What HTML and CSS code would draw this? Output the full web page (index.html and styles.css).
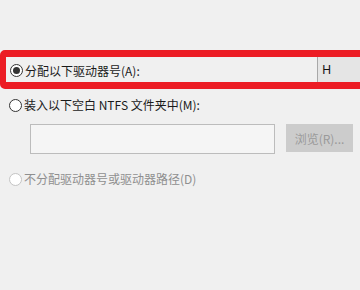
FILE: index.html
```html
<!DOCTYPE html>
<html>
<head>
<meta charset="utf-8">
<link rel="stylesheet" href="styles.css">
</head>
<body>
<div class="page">
  <div class="highlight">
    <div class="opt opt-first">
      <span class="radio checked"></span>
      <span class="label">分配以下驱动器号(A):</span>
    </div>
    <div class="combo">H</div>
  </div>
  <div class="opt opt-second">
    <span class="radio"></span>
    <span class="label">装入以下空白 NTFS 文件夹中(M):</span>
  </div>
  <div class="path-row">
    <div class="textbox"></div>
    <div class="button">浏览(R)...</div>
  </div>
  <div class="opt opt-third">
    <span class="radio disabled"></span>
    <span class="label muted">不分配驱动器号或驱动器路径(D)</span>
  </div>
</div>
</body>
</html>
```
FILE: styles.css
```css
html, body {
  margin: 0;
  padding: 0;
  background: #f0f0f0;
  overflow: hidden;
}
.page {
  width: 360px;
  height: 290px;
  overflow: hidden;
  font-family: "Noto Sans CJK SC", "Noto Sans", sans-serif;
  font-size: 12px;
  color: #1a1a1a;
  padding-top: 50px;
  box-sizing: border-box;
}
.highlight {
  width: 380px;
  height: 39px;
  box-sizing: border-box;
  border: 7px solid #ec1c24;
  border-left-width: 6px;
  border-radius: 5px;
  display: flex;
  align-items: stretch;
  background: #f0f0f0;
}
.opt {
  display: flex;
  align-items: center;
}
.opt-first {
  width: 311px;
  padding-left: 4px;
  padding-top: 2px;
  box-sizing: border-box;
}
.combo {
  flex: 1;
  background: #e5e5e5;
  border-left: 1px solid #a8a8a8;
  padding-left: 4px;
  display: flex;
  align-items: center;
  font-family: "Noto Sans", sans-serif;
  font-size: 12.5px;
  color: #111;
}
.radio {
  width: 13px;
  height: 13px;
  box-sizing: border-box;
  border: 1px solid #333;
  border-radius: 50%;
  background: #fff;
  margin-right: 2px;
  flex: none;
  position: relative;
}
.radio.checked::after {
  content: "";
  position: absolute;
  left: 2px;
  top: 2px;
  width: 7px;
  height: 7px;
  border-radius: 50%;
  background: #333;
}
.radio.disabled {
  border-color: #c4c4c4;
  background: #fff;
}
.label {
  line-height: 16px;
  white-space: nowrap;
}
.muted {
  color: #8f8f8f;
}
.opt-second {
  padding-left: 9px;
  margin-top: 8px;
}
.path-row {
  display: flex;
  margin-top: 11px;
  padding-left: 30px;
}
.textbox {
  width: 245px;
  height: 30px;
  box-sizing: border-box;
  border: 1px solid #bcbcbc;
  background: #f5f5f5;
}
.button {
  margin-left: 11px;
  margin-top: 0px;
  width: 67px;
  height: 28px;
  background: #cccccc;
  color: #9a9a9a;
  display: flex;
  align-items: center;
  justify-content: center;
}
.opt-third {
  padding-left: 9px;
  margin-top: 17px;
}
```
